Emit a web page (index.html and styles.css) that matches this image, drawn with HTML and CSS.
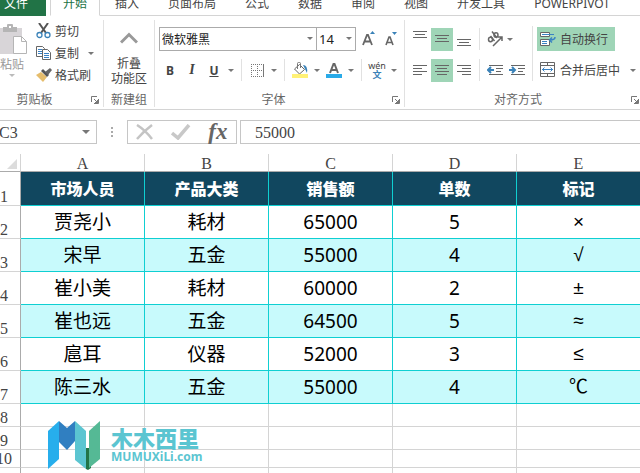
FILE: index.html
```
<!DOCTYPE html>
<html lang="zh-CN">
<head>
    <meta charset="UTF-8">
    <meta name="viewport" content="width=device-width, initial-scale=1.0">
    <title>市场人员销售表</title>
    <link rel="stylesheet" href="styles.css">
</head>
<body>
    <nav class="tabs">
        <a class="tab tab-file" href="#">文件</a>
        <a class="tab tab-active" href="#">开始</a>
        <a class="tab" href="#">插入</a>
        <a class="tab" href="#">页面布局</a>
        <a class="tab" href="#">公式</a>
        <a class="tab" href="#">数据</a>
        <a class="tab" href="#">审阅</a>
        <a class="tab" href="#">视图</a>
        <a class="tab" href="#">开发工具</a>
        <a class="tab" href="#">POWERPIVOT</a>
    </nav>

    <div class="ribbon">
        <!-- Clipboard -->
        <section class="group group-clipboard">
            <div class="group-body">
                <button class="paste-button" type="button">
                    <svg width="30" height="32" viewBox="0 0 30 32">
                        <path d="M1 4h24v26H1z" fill="#d8d5d8"/>
                        <path d="M6 3h4V1q0-1 1-1h4q1 0 1 1v2h4v5H6z" fill="#b5b5b5"/>
                        <path d="M12 2h2v2h-2z" fill="#fff"/>
                        <path d="M16.500 12.500h8l5 5v12h-13z" fill="#fff" stroke="#b5b5b5"/>
                        <path d="M24.500 12.500v5h5" fill="none" stroke="#b5b5b5"/>
                    </svg>
                    <span>粘贴</span>
                    <i class="arrow arrow-pale"></i>
                </button>
                <div class="stack">
                    <button class="text-button" type="button">
                        <svg width="16" height="16" viewBox="0 0 16 16">
                            <path d="M3 0l7 10M12 0L5 10" stroke="#555" stroke-width="2"/>
                            <circle cx="3.500" cy="12" r="2.500" fill="none" stroke="#3a82b8" stroke-width="1.300"/>
                            <circle cx="11.500" cy="12" r="2.500" fill="none" stroke="#3a82b8" stroke-width="1.300"/>
                        </svg>
                        剪切
                    </button>
                    <button class="text-button" type="button">
                        <svg width="16" height="16" viewBox="0 0 16 16">
                            <path d="M.5 1.500h6l2 2v8h-8z" fill="#fff" stroke="#666"/>
                            <path d="M2 4.500h4M2 6.500h4M2 8.500h4" stroke="#3a82c4"/>
                            <path d="M6.500 4.500h5l3 3v7h-8z" fill="#fff" stroke="#666"/>
                            <path d="M8 8.500h5M8 10.500h5M8 12.500h5" stroke="#3a82c4"/>
                        </svg>
                        复制
                        <i class="arrow arrow-apart"></i>
                    </button>
                    <button class="text-button" type="button">
                        <svg width="16" height="16" viewBox="0 0 16 16">
                            <path d="M0 8l5-3 6 5-4 5z" fill="#e6bd6c"/>
                            <path d="M5 4l2-2 6 6-2 2z" fill="#555"/>
                            <path d="M9 5l5-4 2 2-4 5z" fill="#666"/>
                        </svg>
                        格式刷
                    </button>
                </div>
            </div>
            <footer class="group-label">
                <span>剪贴板</span>
                <button class="launcher" type="button" aria-label="剪贴板设置">
                    <svg width="8" height="8" viewBox="0 0 8 8"><path d="M.5 6V.5H6M3 3l3 3M7.500 3v4.500H3M4 6.500h3M6.500 4v3" fill="none" stroke="#777"/></svg>
                </button>
            </footer>
        </section>

        <!-- Custom group -->
        <section class="group group-custom">
            <div class="group-body">
                <button class="collapse-button" type="button">
                    <svg width="18" height="12" viewBox="0 0 18 12"><path d="M1 10.500L9 2.500l8 8" fill="none" stroke="#999" stroke-width="3"/></svg>
                    <span>折叠<br>功能区</span>
                </button>
            </div>
            <footer class="group-label"><span>新建组</span></footer>
        </section>

        <!-- Font -->
        <section class="group group-font">
            <div class="group-body rows">
                <div class="row">
                    <span class="combo combo-font">
                        <select aria-label="字体"><option>微软雅黑</option></select>
                        <i class="arrow"></i>
                    </span>
                    <span class="combo combo-size">
                        <select aria-label="字号"><option>14</option></select>
                        <i class="arrow"></i>
                    </span>
                    <button class="icon-button grow-button" type="button" aria-label="增大字号">
                        <svg width="14" height="16" viewBox="0 0 14 16">
                            <path d="M1 14L5 4h1l4 10M2.500 10.500h6" fill="none" stroke="#666" stroke-width="1.800"/>
                            <path d="M8 3h5l-2.500-3z" fill="#3a82b8"/>
                        </svg>
                    </button>
                    <button class="icon-button" type="button" aria-label="减小字号">
                        <svg width="14" height="16" viewBox="0 0 14 16">
                            <path d="M2 14l3-8h1l3 8M3 11.500h5" fill="none" stroke="#666" stroke-width="1.600"/>
                            <path d="M8 1h5l-2.500 3z" fill="#3a82b8"/>
                        </svg>
                    </button>
                </div>
                <div class="row">
                    <button class="icon-button bold" type="button">B</button>
                    <button class="icon-button italic" type="button">I</button>
                    <button class="icon-button underline" type="button">U</button>
                    <button class="arrow-button" type="button" aria-label="下划线选项"><i class="arrow"></i></button>
                    <i class="divider"></i>
                    <button class="icon-button" type="button" aria-label="边框">
                        <svg width="13" height="13" viewBox="0 0 13 13">
                            <path d="M0 .5h13M0 6.500h13M0 12.500h13M.5 0v13M6.500 0v13" stroke="#777" stroke-dasharray="1 1"/>
                            <path d="M12.500 0v13" stroke="#777"/>
                        </svg>
                    </button>
                    <button class="arrow-button" type="button" aria-label="边框选项"><i class="arrow"></i></button>
                    <i class="divider"></i>
                    <button class="icon-button" type="button" aria-label="填充颜色">
                        <svg width="16" height="16" viewBox="0 0 16 16">
                            <path d="M2.500 7l5-4.500 5 5-5 4.500z" fill="#fff" stroke="#666"/>
                            <path d="M5.500 7V1.500q0-1 1-1h1q1 0 1 1V6" fill="none" stroke="#777"/>
                            <path d="M11 3q5 0 4 8l-2-4z" fill="#3a82b8"/>
                            <path d="M0 12h16v4H0z" fill="#fff176"/>
                        </svg>
                    </button>
                    <button class="arrow-button" type="button" aria-label="填充颜色选项"><i class="arrow"></i></button>
                    <button class="icon-button" type="button" aria-label="字体颜色">
                        <svg width="16" height="16" viewBox="0 0 16 16">
                            <path d="M4 11L7.500 2h1L12 11M5.500 8h5" fill="none" stroke="#666" stroke-width="2"/>
                            <path d="M0 12h16v4H0z" fill="#29aae8"/>
                        </svg>
                    </button>
                    <button class="arrow-button" type="button" aria-label="字体颜色选项"><i class="arrow"></i></button>
                    <i class="divider"></i>
                    <button class="icon-button pinyin" type="button"><span>wén</span><b>文</b></button>
                    <button class="arrow-button" type="button" aria-label="拼音选项"><i class="arrow"></i></button>
                </div>
            </div>
            <footer class="group-label">
                <span>字体</span>
                <button class="launcher" type="button" aria-label="字体设置">
                    <svg width="8" height="8" viewBox="0 0 8 8"><path d="M.5 6V.5H6M3 3l3 3M7.500 3v4.500H3M4 6.500h3M6.500 4v3" fill="none" stroke="#777"/></svg>
                </button>
            </footer>
        </section>

        <!-- Alignment -->
        <section class="group group-align">
            <div class="group-body align-body">
                <div class="rows">
                    <div class="row">
                        <button class="icon-button" type="button" aria-label="顶端对齐">
                            <svg width="14" height="16" viewBox="0 0 14 16"><path d="M0 .5h14M2 3.500h10M0 6.500h14" stroke="#666"/></svg>
                        </button>
                        <button class="icon-button pressed" type="button" aria-label="垂直居中">
                            <svg width="14" height="16" viewBox="0 0 14 16"><path d="M0 4.500h14M2 7.500h10M0 10.500h14" stroke="#666"/></svg>
                        </button>
                        <button class="icon-button" type="button" aria-label="底端对齐">
                            <svg width="14" height="16" viewBox="0 0 14 16"><path d="M0 8.500h14M2 11.500h10M0 14.500h14" stroke="#666"/></svg>
                        </button>
                        <i class="divider"></i>
                        <button class="icon-button" type="button" aria-label="方向">
                            <svg width="16" height="16" viewBox="0 0 16 16" fill="none" stroke="#666" stroke-width="1.500">
                                <ellipse cx="3.500" cy="8.500" rx="2" ry="2.200"/>
                                <path d="M3.500 5l4 5M5 .5l5 6.500"/>
                                <ellipse cx="9" cy="4" rx="2" ry="2.200"/>
                                <path d="M6 15l9-9M11 6h4v4"/>
                            </svg>
                        </button>
                        <button class="arrow-button narrow" type="button" aria-label="方向选项"><i class="arrow"></i></button>
                    </div>
                    <div class="row">
                        <button class="icon-button" type="button" aria-label="左对齐">
                            <svg width="14" height="13" viewBox="0 0 14 13"><path d="M0 1.500h14M0 4.500h9M0 7.500h14M0 10.500h9" stroke="#666"/></svg>
                        </button>
                        <button class="icon-button pressed" type="button" aria-label="居中">
                            <svg width="14" height="13" viewBox="0 0 14 13"><path d="M0 1.500h14M2 4.500h10M0 7.500h14M2 10.500h10" stroke="#666"/></svg>
                        </button>
                        <button class="icon-button" type="button" aria-label="右对齐">
                            <svg width="14" height="13" viewBox="0 0 14 13"><path d="M0 1.500h14M5 4.500h9M0 7.500h14M5 10.500h9" stroke="#666"/></svg>
                        </button>
                        <i class="divider"></i>
                        <button class="icon-button" type="button" aria-label="减少缩进量">
                            <svg width="16" height="13" viewBox="0 0 16 13">
                                <path d="M2 1.500h14M9 4.500h7M9 7.500h5M2 10.500h14" stroke="#666"/>
                                <path d="M7 6H1M4 3L1 6l3 3" fill="none" stroke="#3a82b8" stroke-width="2"/>
                            </svg>
                        </button>
                        <button class="icon-button" type="button" aria-label="增加缩进量">
                            <svg width="16" height="13" viewBox="0 0 16 13">
                                <path d="M2 1.500h14M9 4.500h7M9 7.500h5M2 10.500h14" stroke="#666"/>
                                <path d="M0 6h6M3 3l3 3-3 3" fill="none" stroke="#3a82b8" stroke-width="2"/>
                            </svg>
                        </button>
                    </div>
                </div>
                <i class="divider divider-tall"></i>
                <div class="rows">
                    <button class="text-button wrap-button pressed" type="button">
                        <svg width="16" height="16" viewBox="0 0 16 16">
                            <path d="M.5 1.500h9v4h-9zM.5 8.500h9v6h-9z" fill="#fff" stroke="#666"/>
                            <path d="M2 3.500h12M2 10.500h5M2 12.500h5" stroke="#3a82c4"/>
                            <path d="M15 6q0 3-5 3M12 6.500L9.500 9l2.500 2.500" fill="none" stroke="#3a82c4" stroke-width="1.500"/>
                        </svg>
                        自动换行
                    </button>
                    <button class="text-button wrap-button" type="button">
                        <svg width="16" height="16" viewBox="0 0 16 16">
                            <path d="M.5.5h14v14H.5zM.5 3.500h14M.5 11.500h14M7.500.5v3M7.500 11.500v3" fill="none" stroke="#666"/>
                            <path d="M2 7.500h11M4.500 5.500l-2 2 2 2M10.500 5.500l2 2-2 2" fill="none" stroke="#3a82c4"/>
                        </svg>
                        合并后居中
                        <i class="arrow arrow-apart"></i>
                    </button>
                </div>
            </div>
            <footer class="group-label">
                <span>对齐方式</span>
                <button class="launcher" type="button" aria-label="对齐设置">
                    <svg width="8" height="8" viewBox="0 0 8 8"><path d="M.5 6V.5H6M3 3l3 3M7.500 3v4.500H3M4 6.500h3M6.500 4v3" fill="none" stroke="#777"/></svg>
                </button>
            </footer>
        </section>
    </div>

    <div class="formula-bar">
        <div class="name-box">
            <input type="text" value="C3" aria-label="名称框">
            <i class="arrow"></i>
        </div>
        <span class="dots"><i></i><i></i><i></i></span>
        <div class="formula-buttons">
            <button type="button" aria-label="取消">
                <svg width="18" height="16" viewBox="0 0 18 16"><path d="M1 1q8 5 15 14M16 1Q8 7 1 15" fill="none" stroke="#c4c4c4" stroke-width="2.500"/></svg>
            </button>
            <button type="button" aria-label="输入">
                <svg width="20" height="16" viewBox="0 0 20 16"><path d="M1 9l6 5L18 1" fill="none" stroke="#c8c8c8" stroke-width="3.500"/></svg>
            </button>
            <button class="fx" type="button">fx</button>
        </div>
        <input class="formula-input" type="text" value="55000" aria-label="编辑栏">
    </div>

    <main class="sheet">
        <table class="grid">
            <thead>
                <tr>
                    <th class="corner"><svg width="10" height="10" viewBox="0 0 10 10"><path d="M10 0v10H0z" fill="#dcdcdc"/></svg></th>
                    <th>A</th>
                    <th>B</th>
                    <th>C</th>
                    <th>D</th>
                    <th>E</th>
                </tr>
            </thead>
            <tbody>
                <tr class="title-row"><th>1</th><td>市场人员</td><td>产品大类</td><td>销售额</td><td>单数</td><td>标记</td></tr>
                <tr class="data-row"><th>2</th><td>贾尧小</td><td>耗材</td><td>65000</td><td>5</td><td class="mark">×</td></tr>
                <tr class="data-row tinted"><th>3</th><td>宋早</td><td>五金</td><td>55000</td><td>4</td><td class="mark">√</td></tr>
                <tr class="data-row"><th>4</th><td>崔小美</td><td>耗材</td><td>60000</td><td>2</td><td class="mark">±</td></tr>
                <tr class="data-row tinted"><th>5</th><td>崔也远</td><td>五金</td><td>64500</td><td>5</td><td class="mark">≈</td></tr>
                <tr class="data-row"><th>6</th><td>扈耳</td><td>仪器</td><td>52000</td><td>3</td><td class="mark">≤</td></tr>
                <tr class="data-row tinted"><th>7</th><td>陈三水</td><td>五金</td><td>55000</td><td>4</td><td class="mark">℃</td></tr>
                <tr class="empty-row"><th>8</th><td></td><td></td><td></td><td></td><td></td></tr>
                <tr class="empty-row"><th>9</th><td></td><td></td><td></td><td></td><td></td></tr>
                <tr class="empty-row short"><th>10</th><td></td><td></td><td></td><td></td><td></td></tr>
                <tr class="empty-row"><th></th><td></td><td></td><td></td><td></td><td></td></tr>
            </tbody>
        </table>

        <!-- Watermark floating over the cells -->
        <div class="watermark">
            <svg width="52" height="49" viewBox="0 0 52 49">
                <path d="M0 10L11 0v38L0 48z" fill="#27aeec"/>
                <path d="M11 0l8 7 8-7v20l-8 9-8-8z" fill="#307fc1"/>
                <path d="M27 0l11 10v38L27 39z" fill="#5bc5d1"/>
                <path d="M38 27h5v20l-3 2-2-1z" fill="#227447"/>
                <path d="M52 0L41 10v37l11-9z" fill="#55b995"/>
            </svg>
            <div class="watermark-text">
                <span class="watermark-name">木木西里</span>
                <span class="watermark-site">MUMUXiLi.com</span>
            </div>
        </div>
    </main>
</body>
</html>
```
FILE: styles.css
```
* {
    box-sizing: border-box;
}

body {
    margin: 0;
    height: 100vh;
    display: flex;
    flex-direction: column;
    overflow: hidden;
    background-color: #fff;
    color: #444;
    font-family: "Noto Sans", "Noto Sans CJK SC", sans-serif;
    font-size: 12px;
}

button, input, select {
    font: inherit;
    color: inherit;
    margin: 0;
    padding: 0;
    border: none;
    border-radius: 0;
    background: none;
}

svg {
    display: block;
    flex: none;
}

.arrow {
    flex: none;
    border: 3px solid transparent;
    border-top-color: #777;
    border-bottom: none;
}

.arrow-pale {
    border-top-color: #bbb;
}

.arrow-apart {
    margin-left: 6px;
}

/* Tabs */
.tabs {
    display: flex;
    align-items: flex-end;
    flex: none;
    height: 16px;
    overflow: hidden;
    white-space: nowrap;
}

.tab {
    flex: none;
    height: 24px;
    padding: 0 14px 0 15px;
    border-bottom: 1px solid #d4d4d4;
    color: #444;
    line-height: 24px;
    text-decoration: none;
}

.tab:last-child {
    flex: 1;
}

.tab-file {
    width: 46px;
    padding: 0 0 0 4px;
    border-bottom-color: #217346;
    background-color: #217346;
    color: #fff;
}

.tab-active {
    margin-left: 4px;
    padding: 0 12px;
    border: 1px solid #d4d4d4;
    border-top: none;
    border-bottom-color: #fff;
    color: #217346;
}

/* Ribbon */
.ribbon {
    display: flex;
    flex: none;
    height: 94px;
    margin-left: -22px;
    padding: 4px 0 2px;
    border-bottom: 1px solid #d4d4d4;
}

.group {
    display: flex;
    flex-direction: column;
    flex: none;
    border-right: 1px solid #e1e1e1;
}

.group-clipboard {
    width: 126px;
}

.group-custom {
    width: 51px;
}

.group-font {
    width: 250px;
}

.group-align {
    flex: 1 0 auto;
    border-right: none;
}

.group-body {
    display: flex;
    flex: 1;
}

.group-label {
    display: flex;
    align-items: center;
    height: 14px;
    color: #666;
    line-height: 14px;
}

.group-label span {
    flex: 1;
    text-align: center;
}

.launcher {
    width: 12px;
}

.paste-button {
    display: flex;
    flex-direction: column;
    align-items: center;
    width: 32px;
    margin-left: 18px;
    padding-top: 4px;
    color: #999;
}

.paste-button span {
    line-height: 18px;
}

.stack {
    margin-left: 8px;
}

.text-button {
    display: flex;
    align-items: center;
    gap: 3px;
    height: 22px;
    white-space: nowrap;
}

.collapse-button {
    display: flex;
    flex-direction: column;
    align-items: center;
    gap: 12px;
    width: 100%;
    padding-top: 12px;
    line-height: 15px;
}

.rows {
    display: flex;
    flex-direction: column;
    gap: 7px;
    padding-top: 7px;
}

.row {
    display: flex;
    align-items: center;
    height: 24px;
}

.group-font .row {
    padding-left: 4px;
}

.combo {
    display: flex;
    position: relative;
    height: 24px;
}

.combo select {
    appearance: none;
    width: 100%;
    padding-left: 2px;
    border: 1px solid #ababab;
    background-color: #fff;
    color: #222;
}

.combo .arrow {
    position: absolute;
    top: 10px;
    right: 4px;
}

.combo-font {
    width: 158px;
}

.combo-size {
    width: 39px;
}

.combo-size select {
    border-left: none;
    font-size: 13px;
}

.grow-button {
    margin-left: 2px;
}

.icon-button {
    display: flex;
    align-items: center;
    justify-content: center;
    width: 22px;
    height: 23px;
}

.pressed {
    background-color: #9fd5b7;
}

.arrow-button {
    display: flex;
    justify-content: center;
    width: 12px;
}

.narrow {
    width: 8px;
}

.bold {
    font-weight: 700;
}

.italic {
    font-family: "Liberation Serif", serif;
    font-size: 14px;
    font-style: italic;
    font-weight: 700;
}

.underline {
    font-weight: 700;
    text-decoration: underline;
}

.divider {
    width: 1px;
    height: 22px;
    margin: 0 4px;
    background-color: #e1e1e1;
}

.pinyin {
    flex-direction: column;
    font-size: 9px;
    line-height: 9px;
}

.pinyin b {
    color: #3a82b8;
    line-height: 10px;
}

.align-body {
    padding-left: 4px;
}

.divider-tall {
    height: 55px;
    margin-top: 6px;
}

.wrap-button {
    gap: 4px;
    height: 24px;
    padding: 0 7px 0 3px;
}

.wrap-button.pressed {
    align-self: flex-start;
}

/* Formula bar */
.formula-bar {
    display: flex;
    align-items: center;
    flex: none;
    height: 44px;
    font-family: "Liberation Serif", serif;
    font-size: 16px;
}

.name-box {
    display: flex;
    align-items: center;
    width: 101px;
    height: 24px;
    margin-left: -4px;
    padding: 0 6px 0 2px;
    border: 1px solid #c6c6c6;
}

.name-box input {
    flex: 1;
    min-width: 0;
    padding-top: 2px;
}

.name-box .arrow {
    border-width: 4px 4px 0;
}

.dots {
    display: flex;
    flex-direction: column;
    gap: 2px;
    width: 30px;
    align-items: center;
}

.dots i {
    width: 2px;
    height: 2px;
    background-color: #aaa;
}

.formula-buttons {
    display: flex;
    align-items: center;
    justify-content: space-around;
    width: 110px;
    height: 24px;
    border: 1px solid #c6c6c6;
}

.fx {
    color: #666;
    font-size: 23px;
    font-style: italic;
    font-weight: 700;
    line-height: 20px;
}

.formula-input {
    flex: 1;
    min-width: 0;
    height: 24px;
    margin-left: 3px;
    padding: 2px 0 0 14px;
    border: 1px solid #c6c6c6;
    border-right: none;
}

/* Sheet */
.sheet {
    position: relative;
    flex: 1;
    overflow: hidden;
}

.grid {
    width: calc(100% + 13px);
    margin-left: -12px;
    border-collapse: separate;
    border-spacing: 0;
    table-layout: fixed;
    text-align: center;
}

.grid th, .grid td {
    padding: 0;
    border-right: 1px solid #d4d4d4;
    border-bottom: 1px solid #d4d4d4;
}

.grid th {
    color: #444;
    font-family: "Liberation Serif", serif;
    font-size: 16px;
    font-weight: 400;
    line-height: 16px;
}

.grid thead th {
    height: 18px;
    padding-top: 3px;
    border-bottom-color: #ababab;
    line-height: 14px;
}

.grid .corner {
    width: 33px;
}

.corner svg {
    margin-left: 19px;
}

.grid tbody th {
    vertical-align: bottom;
    border-right-color: #ababab;
}

.title-row td, .data-row td {
    color: #000;
    font-size: 19px;
    line-height: 20px;
}

.grid .title-row td, .grid .data-row td {
    border-color: #0fcfd2;
}

.title-row {
    height: 34px;
}

.title-row td {
    background-color: #11475f;
    color: #fff;
    font-size: 16px;
    font-weight: 900;
}

.data-row {
    height: 33px;
}

.tinted td {
    background-color: #c8fafc;
}

.grid .mark {
    font-family: "Liberation Sans", "Noto Sans CJK SC", sans-serif;
    font-size: 19px;
}

.empty-row {
    height: 23px;
}

.short {
    height: 18px;
}

/* Watermark */
.watermark {
    position: absolute;
    top: 267px;
    left: 48px;
    display: flex;
    gap: 11px;
    color: #5bc5d1;
    font-weight: 700;
}

.watermark-text {
    display: flex;
    flex-direction: column;
    padding-top: 5px;
}

.watermark-name {
    font-size: 22px;
    font-weight: 900;
    line-height: 24px;
}

.watermark-site {
    font-size: 12px;
    line-height: 14px;
}
```
